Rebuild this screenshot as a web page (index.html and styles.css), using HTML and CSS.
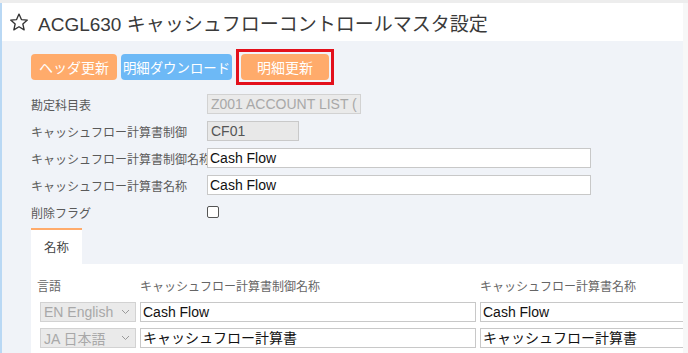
FILE: index.html
```html
<html>
    <head>
        <link rel="stylesheet" href="styles.css">
    </head>
<body>
    <div class="topStrip"></div>
    <div class="page">
        <div class="header">
            <svg class="star" width="20" height="20" viewBox="0 0 24 24">
                <path d="M12 2.5l2.9 6.6 7.1.6-5.4 4.7 1.6 7-6.2-3.7-6.2 3.7 1.6-7L2 9.7l7.1-.6z" fill="none" stroke="#333" stroke-width="1.6" stroke-linejoin="round"/>
            </svg>
            <h1 class="title">ACGL630 キャッシュフローコントロールマスタ設定</h1>
        </div>

        <div class="content">
            <div class="toolbar">
                <button class="btn btnOrange btnHeader">ヘッダ更新</button>
                <button class="btn btnBlue btnDownload">明細ダウンロード</button>
                <div class="highlight">
                    <button class="btn btnOrange btnDetail">明細更新</button>
                </div>
            </div>

            <div class="form">
                <div class="formRow">
                    <span class="label">勘定科目表</span>
                    <div class="select selectWide">
                        <span>Z001 ACCOUNT LIST (</span>
                        <svg class="chev" width="9" height="6" viewBox="0 0 9 6"><path d="M1 1l3.5 3.5L8 1" fill="none" stroke="#999" stroke-width="1"/></svg>
                    </div>
                </div>
                <div class="formRow">
                    <span class="label">キャッシュフロー計算書制御</span>
                    <div class="readonly">CF01</div>
                </div>
                <div class="formRow">
                    <span class="label">キャッシュフロー計算書制御名称</span>
                    <div class="textInput">Cash Flow</div>
                </div>
                <div class="formRow">
                    <span class="label">キャッシュフロー計算書名称</span>
                    <div class="textInput">Cash Flow</div>
                </div>
                <div class="formRow">
                    <span class="label">削除フラグ</span>
                    <span class="checkbox"></span>
                </div>
            </div>

            <div class="tabs">
                <div class="tab">名称</div>
            </div>
            <div class="panel">
                <div class="grid">
                    <div class="th">言語</div>
                    <div class="th">キャッシュフロー計算書制御名称</div>
                    <div class="th">キャッシュフロー計算書名称</div>

                    <div class="select">
                        <span>EN English</span>
                        <svg class="chev" width="9" height="6" viewBox="0 0 9 6"><path d="M1 1l3.5 3.5L8 1" fill="none" stroke="#999" stroke-width="1"/></svg>
                    </div>
                    <div class="textInput">Cash Flow</div>
                    <div class="textInput">Cash Flow</div>

                    <div class="select">
                        <span>JA 日本語</span>
                        <svg class="chev" width="9" height="6" viewBox="0 0 9 6"><path d="M1 1l3.5 3.5L8 1" fill="none" stroke="#999" stroke-width="1"/></svg>
                    </div>
                    <div class="textInput">キャッシュフロー計算書</div>
                    <div class="textInput">キャッシュフロー計算書</div>
                </div>
            </div>
        </div>
    </div>
</body>
</html>
```

FILE: styles.css
```css
* {
    font-family: "Liberation Sans", "Noto Sans CJK JP", sans-serif;
    box-sizing: border-box;
}
body {
    margin: 0;
    width: 688px;
    height: 353px;
    overflow: hidden;
    background: #f7f7f7;
}
.topStrip {
    height: 3px;
    background: #ededed;
}
.page {
    width: 683px;
    height: 350px;
    overflow: hidden;
    border-left: 2px solid #b9d8f4;
    background: #f0f3f8;
}

.header {
    height: 38px;
    background: #fff;
    display: flex;
    align-items: center;
    padding-left: 7px;
}
.star {
    margin-right: 9px;
}
.title {
    margin: 0;
    font-size: 19px;
    font-weight: normal;
    color: #3a3a3a;
}

.content {
    padding-left: 29px;
    padding-top: 8px;
}

.toolbar {
    display: flex;
    align-items: center;
    gap: 4px;
    height: 36px;
}
.btn {
    height: 26px;
    border: none;
    border-radius: 4px;
    color: #fff;
    font-size: 14px;
    padding: 0;
}
.btnOrange {
    background: #ffab6b;
}
.btnBlue {
    background: #6db9f6;
}
.btnHeader {
    width: 86px;
}
.btnDownload {
    width: 111px;
    font-size: 13.4px;
}
.btnDetail {
    width: 88px;
}
.highlight {
    border: 3px solid #e3101b;
    padding: 2px;
}

.form {
    margin-top: 9px;
    display: flex;
    flex-direction: column;
    gap: 7px;
}
.formRow {
    display: flex;
    align-items: center;
    height: 20px;
}
.label {
    width: 176px;
    flex-shrink: 0;
    font-size: 12px;
    color: #5a5a5a;
    white-space: nowrap;
}

.select {
    height: 20px;
    background: #eaeaea;
    border: 1px solid #d2d2d2;
    color: #a8a8a8;
    font-size: 14px;
    display: flex;
    align-items: center;
    justify-content: space-between;
    padding: 0 5px 0 3px;
    white-space: nowrap;
}
.selectWide {
    width: 154px;
}
.readonly {
    width: 92px;
    height: 20px;
    background: #e8e8e8;
    border: 1px solid #c9c9c9;
    color: #555;
    font-size: 14px;
    line-height: 18px;
    padding-left: 3px;
}
.textInput {
    width: 384px;
    height: 20px;
    background: #fff;
    border: 1px solid #c8c8c8;
    color: #111;
    font-size: 14px;
    line-height: 18px;
    padding-left: 2px;
    white-space: nowrap;
}
.checkbox {
    width: 12px;
    height: 12px;
    border: 1px solid #555;
    border-radius: 2px;
    background: #fff;
}

.tabs {
    margin-top: 6px;
    display: flex;
}
.tab {
    width: 51px;
    height: 36px;
    background: #fff;
    border-top: 2px solid #ffab6b;
    font-size: 12.4px;
    color: #444;
    display: flex;
    align-items: center;
    justify-content: center;
}
.panel {
    background: #fff;
    height: 100px;
    padding-left: 9px;
}
.grid {
    display: grid;
    grid-template-columns: 96px 336px 336px;
    grid-template-rows: 32px 20px 20px;
    column-gap: 4px;
    row-gap: 6px;
}
.grid .textInput {
    width: auto;
}
.th {
    font-size: 12px;
    color: #666;
    display: flex;
    align-items: center;
    padding-top: 10px;
    white-space: nowrap;
}
.th:first-child {
    margin-left: -3px;
}
```
